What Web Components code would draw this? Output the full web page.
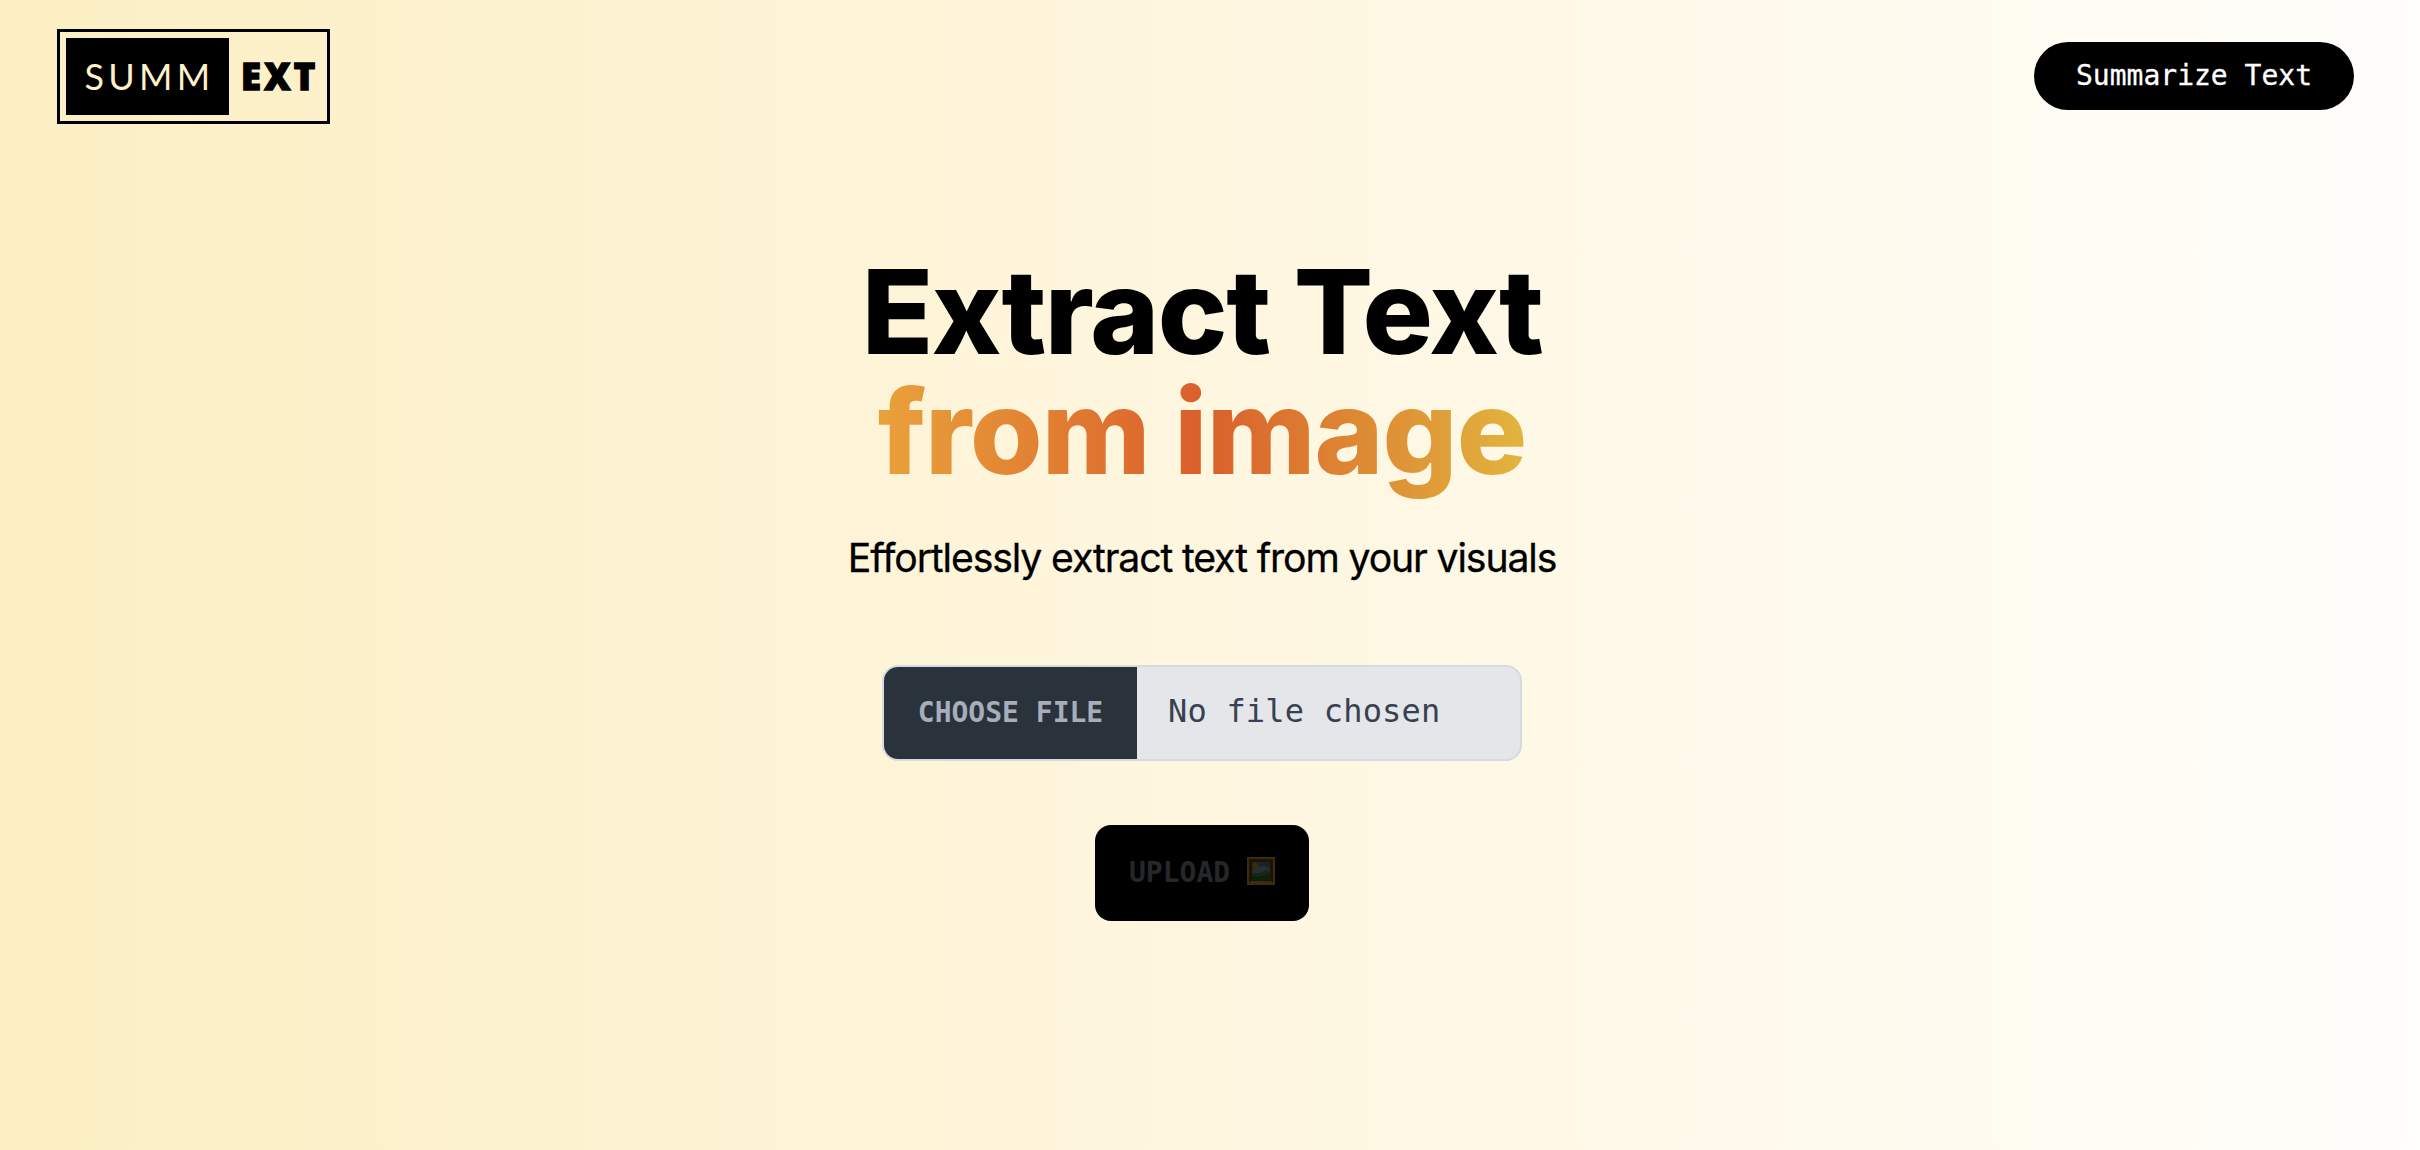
<!DOCTYPE html>
<html lang="en"><head><meta charset="utf-8"><title>Summext</title>
<style>html,body{margin:0;height:100%}body{font-family:"DejaVu Sans Mono",monospace;background:#fffefb}</style></head>
<body><summext-app></summext-app>
<script>
const define=(name,html)=>customElements.define(name,class extends HTMLElement{
  constructor(){super();this.attachShadow({mode:'open'}).innerHTML=html;}
});
define('brand-logo',`<style>
:host{display:flex;box-sizing:border-box;width:273px;height:95px;border:3px solid #000;padding:6px;align-items:stretch}
.dark{width:163px;background:#000;color:#fef0c8;display:flex;align-items:center;justify-content:center}
.summ{font:400 36px/73px Lato,sans-serif;letter-spacing:4.3px;margin:0 -4px 1px 0}
.ext{flex:1;display:flex;align-items:center;padding-left:12px;font:800 36.4px/73px "Open Sans",sans-serif;letter-spacing:3.2px;-webkit-text-stroke:1.4px #000}
.ext span{margin:0 -6px 1px 0}
</style><div class="dark"><span class="summ">SUMM</span></div><div class="ext"><span>EXT</span></div>`);
define('pill-button',`<style>
:host{display:flex;box-sizing:border-box;width:320px;height:68px;border-radius:34px;background:#000;color:#fff;align-items:center;justify-content:center;font:28px/40px "DejaVu Sans Mono",monospace;padding-bottom:1px;-webkit-text-stroke:.3px #fff}
</style><slot></slot>`);
define('page-header',`<style>
:host{display:flex;justify-content:space-between;align-items:flex-start;padding:29px 66px 0 57px}
pill-button{margin-top:13px}
</style><brand-logo></brand-logo><pill-button>Summarize Text</pill-button>`);
define('hero-title',`<style>
:host{display:block;text-align:center}
h1{margin:0;font:800 117.3px/120px Inter,sans-serif;white-space:nowrap}
h1 span{display:block;width:max-content;margin:0 auto}
.a{letter-spacing:-1.45px}
.b{letter-spacing:-.9px;background:linear-gradient(90deg,#e9a23b,#da5f2b 50%,#e2b53e);-webkit-background-clip:text;background-clip:text;color:transparent;padding-bottom:12px}
p{margin:27px 0 0;font:400 39.2px/56px Inter,sans-serif;letter-spacing:-1.13px;white-space:nowrap;-webkit-text-stroke:.3px #000}
</style><h1><span class="a">Extract Text</span><span class="b">from image</span></h1><p>Effortlessly extract text from your visuals</p>`);
define('file-picker',`<style>
:host{display:flex;box-sizing:border-box;width:640px;height:96px;border:2px solid #d6dae1;border-radius:16px;overflow:hidden;background:#e5e6ea;color:#374151;font:32px/89px "DejaVu Sans Mono",monospace;letter-spacing:.2px}
.btn{width:253px;background:#2a323c;color:#a6adbb;text-align:center;font-weight:700;font-size:28px;line-height:92px;letter-spacing:0}
.name{padding-left:31px}
</style><div class="btn">CHOOSE FILE</div><div class="name">No file chosen</div>`);
define('framed-picture',`<style>:host{display:block;width:28px;height:28px}svg{display:block}</style>
<svg width="28" height="28" viewBox="0 0 28 28"><path fill="#3a2c0c" d="M0 0h28v28H0z"/><path fill="#1d1304" d="M2 2h24v24H2z"/><path fill="#3c2d0e" d="M0 28l4-4h20l4 4z"/><path fill="#15232a" d="M5 5h18v18H5z"/><path fill="#292d30" d="M5 13q1-3 4-2q2-4 5-1q3-3 5 0q4-1 4 3v3H5z"/><circle cx="8" cy="8" r="2.8" fill="#392c05"/><path fill="#122a12" d="M5 16q6 2 10-1q5-3 8 0v8H5z"/><path fill="#0d200c" d="M5 19q7 2 18-2v6H5z"/></svg>`);
define('upload-button',`<style>
:host{display:flex;box-sizing:border-box;width:214px;height:96px;border-radius:16px;background:#000;color:#25272a;align-items:center;padding-left:34px;gap:17px;font:700 28px/92px "DejaVu Sans Mono",monospace}
framed-picture{margin-top:-4px}
</style><slot></slot><framed-picture></framed-picture>`);
define('summext-app',`<style>
:host{display:block;box-sizing:border-box;width:100%;height:1150px;overflow:hidden;background:linear-gradient(90deg,#fcefc3,#fef6df 50%,#fffefb)}
main{display:flex;flex-direction:column;align-items:center;padding:127px 16px 0 0}
file-picker{margin-top:79px}
upload-button{margin-top:64px}
</style><page-header></page-header><main><hero-title></hero-title><file-picker></file-picker><upload-button>UPLOAD</upload-button></main>`);
</script></body></html>
